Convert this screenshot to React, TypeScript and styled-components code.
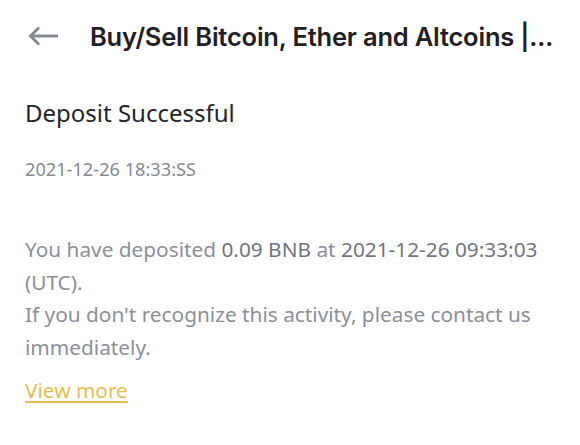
import React from "react";
import styled, { createGlobalStyle } from "styled-components";

const Global = createGlobalStyle`
  html, body { margin: 0; padding: 0; background: #ffffff; }
  body { width: 580px; height: 445px; overflow: hidden; }
`;

const Page = styled.div`
  width: 580px;
  height: 445px;
  background: #fff;
  display: flex;
  flex-direction: column;
  box-sizing: border-box;
`;

const Header = styled.header`
  display: flex;
  align-items: center;
  height: 72px;
  padding: 0 0 0 28px;
  gap: 30px;
`;

const BackButton = styled.button`
  border: none;
  background: none;
  padding: 0;
  width: 32px;
  height: 32px;
  display: flex;
  align-items: center;
  justify-content: center;
  color: #858a94;
  cursor: pointer;
`;

const Title = styled.h1`
  margin: 0;
  font-family: Inter, "Liberation Sans", sans-serif;
  font-weight: 600;
  font-size: 25.5px;
  letter-spacing: -0.2px;
  color: #1e2026;
  white-space: nowrap;
`;

const Content = styled.main`
  display: flex;
  flex-direction: column;
  padding: 26px 30px 0 25px;
`;

const Heading = styled.h2`
  margin: 0;
  font-family: "Noto Sans", Roboto, sans-serif;
  font-weight: 400;
  font-size: 24px;
  line-height: 30px;
  color: #22252b;
`;

const Timestamp = styled.div`
  margin-top: 30px;
  font-family: "Noto Sans", Roboto, sans-serif;
  font-size: 18.2px;
  line-height: 22px;
  color: #858a94;
`;

const Message = styled.p`
  margin: 53px 0 0 0;
  font-family: "Noto Sans", Roboto, sans-serif;
  font-size: 20.8px;
  line-height: 32.5px;
  color: #8a8f99;
`;

const Strong = styled.span`
  color: #70757f;
`;

const Link = styled.a`
  margin-top: 12px;
  font-family: "Noto Sans", Roboto, sans-serif;
  font-size: 20.8px;
  line-height: 30px;
  color: #e6be4c;
  text-decoration: underline;
  text-underline-offset: 3px;
  align-self: flex-start;
`;

export default function App() {
  return (
    <>
      <Global />
      <Page>
        <Header>
          <BackButton aria-label="Back">
            <svg width="32" height="22" viewBox="0 0 32 22" fill="none">
              <path
                d="M30 11H3M11 2.5L2.5 11L11 19.5"
                stroke="currentColor"
                strokeWidth="3"
                strokeLinecap="butt"
                strokeLinejoin="miter"
              />
            </svg>
          </BackButton>
          <Title>Buy/Sell Bitcoin, Ether and Altcoins |...</Title>
        </Header>
        <Content>
          <Heading>Deposit Successful</Heading>
          <Timestamp>2021-12-26 18:33:SS</Timestamp>
          <Message>
            You have deposited <Strong>0.09 BNB</Strong> at{" "}
            <Strong>2021-12-26 09:33:03</Strong> (UTC).
            <br />
            If you don't recognize this activity, please contact us immediately.
          </Message>
          <Link href="#">View more</Link>
        </Content>
      </Page>
    </>
  );
}
